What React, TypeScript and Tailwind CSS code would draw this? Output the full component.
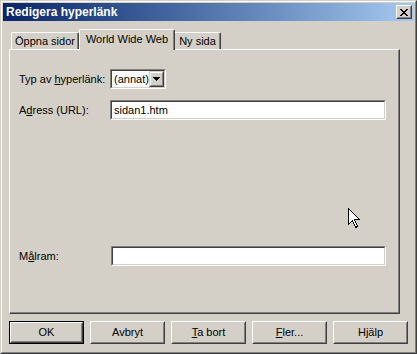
import React from "react";

const face = "bg-[#d4d0c8]";

function Btn({ children, def = false }: { children: React.ReactNode; def?: boolean }) {
  const inner = (
    <div className="h-full w-full border border-t-white border-l-white border-r-[#404040] border-b-[#404040]">
      <div className="h-full w-full border border-t-[#d4d0c8] border-l-[#d4d0c8] border-r-[#808080] border-b-[#808080] flex items-center justify-center">
        {children}
      </div>
    </div>
  );
  if (def) {
    return <div className="w-[75px] h-[23px] border border-black">{inner}</div>;
  }
  return <div className="w-[75px] h-[23px]">{inner}</div>;
}

function Sunken({ className, children }: { className: string; children?: React.ReactNode }) {
  return (
    <div className={`${className} border border-t-[#808080] border-l-[#808080] border-r-white border-b-white`}>
      <div className="h-full w-full border border-t-[#404040] border-l-[#404040] border-r-[#d4d0c8] border-b-[#d4d0c8] bg-white flex items-center">
        {children}
      </div>
    </div>
  );
}

export default function App() {
  return (
    <div className="w-[417px] h-[354px] relative text-[11px] text-black [font-family:'Liberation_Sans',Arial,sans-serif]">
      <div className={`h-full w-full ${face} border border-t-[#d4d0c8] border-l-[#d4d0c8] border-r-[#404040] border-b-[#404040]`}>
        <div className="h-full w-full border border-t-white border-l-white border-r-[#808080] border-b-[#808080] p-px flex flex-col">
          {/* title bar */}
          <div className="h-[18px] flex items-center justify-between bg-linear-to-r from-[#0a246a] to-[#a6caf0]">
            <span className="pl-[3px] text-white font-bold text-[12px] leading-none">Redigera hyperlänk</span>
            <div className={`mr-[2px] w-[16px] h-[14px] ${face} border border-t-white border-l-white border-r-[#404040] border-b-[#404040]`}>
              <div className="h-full w-full border border-t-[#d4d0c8] border-l-[#d4d0c8] border-r-[#808080] border-b-[#808080] flex items-center justify-center">
                <svg width="8" height="7" viewBox="0 0 8 7" shapeRendering="crispEdges">
                  <path d="M0 0h2v1h-2zM6 0h2v1h-2zM1 1h2v1h-2zM5 1h2v1h-2zM2 2h4v1h-4zM3 3h2v1h-2zM2 4h4v1h-4zM1 5h2v1h-2zM5 5h2v1h-2zM0 6h2v1h-2zM6 6h2v1h-2z" fill="#000" />
                </svg>
              </div>
            </div>
          </div>

          {/* body */}
          <div className="pl-[6px] pt-[8px] flex flex-col">
            {/* tabs */}
            <div className="flex items-end h-[20px] pl-[2px]">
              <div className="w-[68px] h-[17px] border-l border-t border-r border-l-white border-t-white border-r-[#404040] rounded-t-[2px] shadow-[inset_-1px_0_0_#808080] flex items-center justify-center">
                Öppna sidor
              </div>
              <div className={`relative z-10 -mb-px w-[96px] h-[21px] ${face} border-l border-t border-r border-l-white border-t-white border-r-[#404040] rounded-t-[2px] shadow-[inset_-1px_0_0_#808080] flex items-center justify-center pb-[2px]`}>
                World Wide Web
              </div>
              <div className="w-[46px] h-[17px] border-t border-r border-t-white border-r-[#404040] rounded-tr-[2px] shadow-[inset_-1px_0_0_#808080] flex items-center justify-center">
                Ny sida
              </div>
            </div>

            {/* panel */}
            <div className="w-[391px] h-[265px] border border-t-white border-l-white border-r-[#404040] border-b-[#404040] shadow-[inset_-1px_-1px_0_#808080] pl-[9px] pt-[19px] flex flex-col">
              <div className="flex items-center h-[20px]">
                <span className="w-[91px]">
                  Typ av <span className="underline">h</span>yperlänk:
                </span>
                <Sunken className="w-[56px] h-[20px]">
                  <span className="pl-[2px] flex-1">(annat)</span>
                  <div className={`w-[16px] h-[16px] ${face} border border-t-[#d4d0c8] border-l-[#d4d0c8] border-r-[#404040] border-b-[#404040]`}>
                    <div className="h-full w-full border border-t-white border-l-white border-r-[#808080] border-b-[#808080] flex items-center justify-center">
                      <svg width="7" height="4" viewBox="0 0 7 4" shapeRendering="crispEdges">
                        <path d="M0 0h7v1h-7zM1 1h5v1h-5zM2 2h3v1h-3zM3 3h1v1h-1z" fill="#000" />
                      </svg>
                    </div>
                  </div>
                </Sunken>
              </div>
              <div className="flex items-center h-[20px] mt-[11px]">
                <span className="w-[91px]">
                  A<span className="underline">d</span>ress (URL):
                </span>
                <Sunken className="w-[276px] h-[20px]">
                  <span className="pl-[2px]">sidan1.htm</span>
                </Sunken>
              </div>
              <div className="flex items-center h-[20px] mt-[126px]">
                <span className="w-[92px]">
                  M<span className="underline">å</span>lram:
                </span>
                <Sunken className="w-[275px] h-[20px]" />
              </div>
            </div>

            {/* buttons */}
            <div className="flex gap-[6px] mt-[7px]">
              <Btn def>OK</Btn>
              <Btn>Avbryt</Btn>
              <Btn>
                <span>
                  <span className="underline">T</span>a bort
                </span>
              </Btn>
              <Btn>
                <span>
                  <span className="underline">F</span>ler...
                </span>
              </Btn>
              <Btn>Hjälp</Btn>
            </div>
          </div>
        </div>
      </div>

      {/* mouse cursor */}
      <svg className="absolute left-[348px] top-[208px]" width="13" height="21" viewBox="0 0 13 21" shapeRendering="crispEdges">
        <path d="M0.5 0.5 L0.5 16.5 L4.5 12.5 L7.5 19.5 L9.5 18.5 L6.5 11.5 L11.5 11.5 Z" fill="#fff" stroke="#000" strokeWidth="1" />
      </svg>
    </div>
  );
}
